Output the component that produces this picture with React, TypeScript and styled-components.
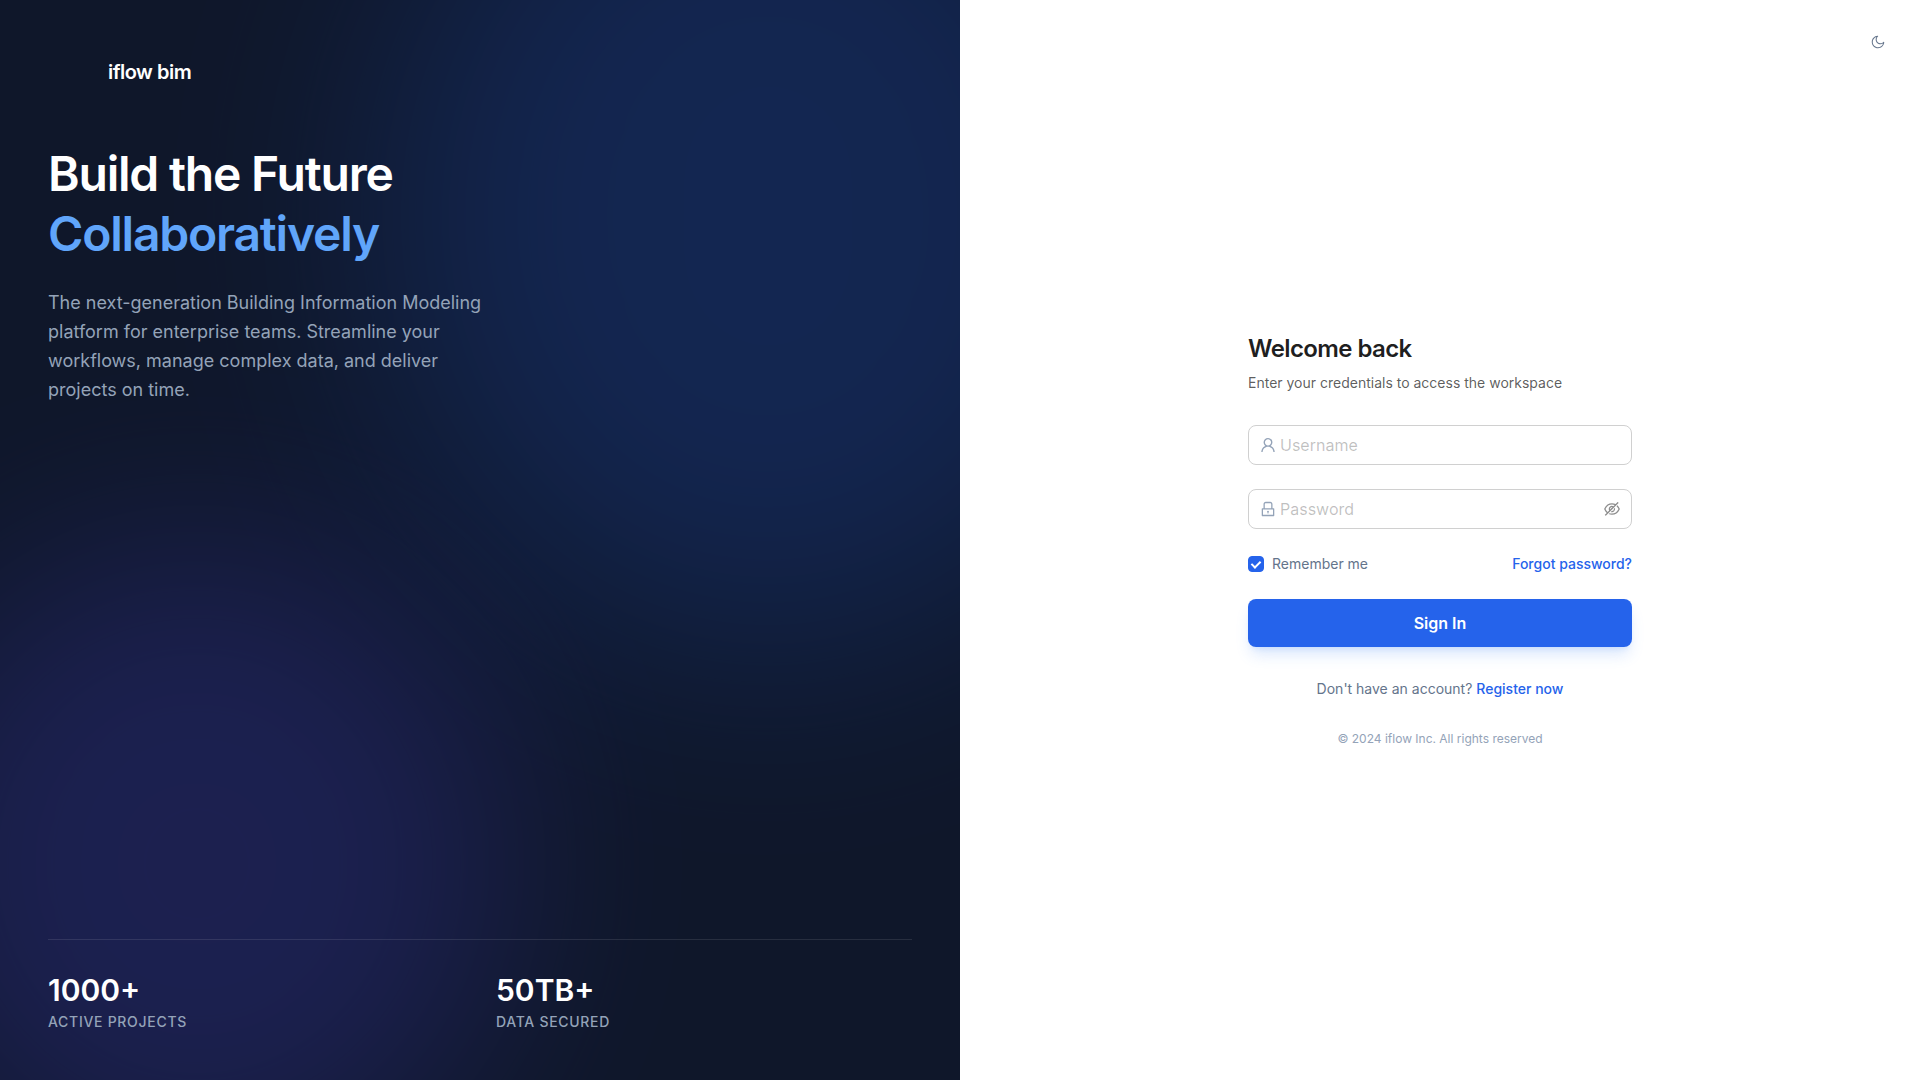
import React, { useState } from "react";
import styled, { createGlobalStyle } from "styled-components";
import { AiOutlineEye, AiOutlineEyeInvisible, AiOutlineLock, AiOutlineUser } from "react-icons/ai";

const GlobalStyle = createGlobalStyle`
  *, *::before, *::after { box-sizing: border-box; }
  body {
    margin: 0;
    background: #ffffff;
    font-family: Inter, "Liberation Sans", sans-serif;
    font-size: 14px;
    line-height: 20px;
  }
  h1, h2, p, dl, dt, dd { margin: 0; }
  button, input { font-family: inherit; }
`;

const Page = styled.main`
  display: grid;
  grid-template-columns: 1fr 1fr;
  min-height: 100vh;

  @media (max-width: 900px) {
    grid-template-columns: 1fr;
  }
`;

const Hero = styled.section`
  position: relative;
  isolation: isolate;
  overflow: hidden;
  display: flex;
  flex-direction: column;
  justify-content: space-between;
  gap: 48px;
  padding: 48px;
  background: #0f172a;
  color: #ffffff;
`;

const Glow = styled.span<{ $width: string; $height: string; $blur: number; $color: string; $place: string }>`
  position: absolute;
  z-index: -1;
  inset: ${(p) => p.$place};
  width: ${(p) => p.$width};
  height: ${(p) => p.$height};
  border-radius: 50%;
  background: ${(p) => p.$color};
  opacity: 0.2;
  filter: blur(${(p) => p.$blur}px);
`;

const Intro = styled.div`
  display: flex;
  flex-direction: column;
`;

const Brand = styled.div`
  display: flex;
  align-items: center;
  gap: 12px;
  margin-bottom: 48px;
  font-size: 20px;
  font-weight: 600;
  letter-spacing: -0.025em;
`;

const BrandMark = styled.span`
  width: 48px;
  height: 48px;
`;

const Headline = styled.h1`
  margin-bottom: 24px;
  font-size: 48px;
  font-weight: 600;
  line-height: 60px;
  letter-spacing: -0.025em;
`;

const Accent = styled.span`
  display: block;
  color: #60a5fa;
`;

const Lead = styled.p`
  max-width: 448px;
  color: #94a3b8;
  font-size: 18px;
  line-height: 29px;
`;

const Stats = styled.dl`
  display: grid;
  grid-template-columns: 1fr 1fr;
  gap: 32px;
  padding-top: 32px;
  border-top: 1px solid rgba(255, 255, 255, 0.1);
`;

const Stat = styled.div`
  display: flex;
  flex-direction: column-reverse;
  gap: 4px;
`;

const StatLabel = styled.dt`
  color: #94a3b8;
  font-weight: 500;
  text-transform: uppercase;
  letter-spacing: 0.05em;
`;

const StatValue = styled.dd`
  font-size: 30px;
  font-weight: 600;
  line-height: 36px;
`;

const FormSide = styled.section`
  position: relative;
  display: flex;
  align-items: center;
  justify-content: center;
  padding: 32px;
`;

const ThemeButton = styled.button`
  position: absolute;
  top: 24px;
  right: 24px;
  display: grid;
  place-items: center;
  width: 36px;
  height: 36px;
  padding: 0;
  border: 0;
  border-radius: 50%;
  background: transparent;
  color: #64748b;
  font-size: 14px;
  cursor: pointer;
`;

const Panel = styled.div`
  width: 100%;
  max-width: 384px;
`;

const Title = styled.h2`
  margin-bottom: 8px;
  color: rgba(0, 0, 0, 0.88);
  font-size: 24px;
  font-weight: 600;
  line-height: 32px;
  letter-spacing: -0.025em;
`;

const Subtitle = styled.p`
  margin-bottom: 32px;
  color: rgba(0, 0, 0, 0.65);
`;

const Form = styled.form`
  display: flex;
  flex-direction: column;
  gap: 24px;
`;

const Field = styled.label`
  display: flex;
  align-items: center;
  gap: 4px;
  height: 40px;
  padding: 0 11px;
  border: 1px solid #d0d0d0;
  border-radius: 8px;
  background: #ffffff;
  color: #94a3b8;
  font-size: 16px;

  &:focus-within { border-color: #2563eb; }
  svg { flex: none; }
`;

const TextInput = styled.input`
  flex: 1;
  min-width: 0;
  padding: 0;
  border: 0;
  outline: 0;
  background: transparent;
  color: rgba(0, 0, 0, 0.88);
  font-size: 16px;
  line-height: 24px;

  &::placeholder { color: rgba(0, 0, 0, 0.25); opacity: 1; }
`;

const RevealButton = styled.button`
  display: grid;
  place-items: center;
  padding: 0;
  border: 0;
  background: transparent;
  color: rgba(0, 0, 0, 0.45);
  font-size: 16px;
  cursor: pointer;
`;

const Options = styled.div`
  display: flex;
  align-items: center;
  justify-content: space-between;
  height: 22px;
`;

const Remember = styled.label`
  display: flex;
  align-items: center;
  gap: 8px;
  color: #64748b;
  cursor: pointer;
`;

const Checkbox = styled.input`
  appearance: none;
  display: grid;
  justify-content: center;
  width: 16px;
  height: 16px;
  margin: 0;
  border: 1px solid #d0d0d0;
  border-radius: 4px;

  &:checked { border-color: #2563eb; background: #2563eb; }
  &:checked::after {
    content: "";
    width: 6px;
    height: 9px;
    margin-top: 2px;
    border: solid #ffffff;
    border-width: 0 2px 2px 0;
    transform: rotate(45deg);
  }
`;

const TextLink = styled.a`
  color: #2563eb;
  font-weight: 500;
  text-decoration: none;
`;

const SubmitButton = styled.button`
  height: 48px;
  border: 0;
  border-radius: 8px;
  background: #2563eb;
  box-shadow: 0 10px 15px -3px rgba(59, 130, 246, 0.2), 0 4px 6px -4px rgba(59, 130, 246, 0.2);
  color: #ffffff;
  font-size: 16px;
  font-weight: 600;
  cursor: pointer;
`;

const Register = styled.p`
  margin-top: 32px;
  color: #64748b;
  text-align: center;
`;

const Copyright = styled.p`
  margin-top: 32px;
  color: #94a3b8;
  font-size: 12px;
  line-height: 16px;
  text-align: center;
`;

const ICON_BOX = "64 64 896 896";

const MoonIcon = () => (
  <svg viewBox={ICON_BOX} width="1em" height="1em" fill="currentColor" aria-hidden="true">
    <path d="M489.5 111.66c30.65-1.8 45.98 36.44 22.58 56.33A243.35 243.35 0 00426 354c0 134.76 109.24 244 244 244 72.58 0 139.9-31.83 186.01-86.08 19.87-23.38 58.07-8.1 56.34 22.53C900.4 745.82 725.15 912 512.5 912 291.31 912 112 732.69 112 511.5c0-211.39 164.29-386.02 374.2-399.65l.2-.01zm-81.15 79.75l-4.11 1.36C271.1 237.94 176 364.09 176 511.5 176 697.34 326.66 848 512.5 848c148.28 0 274.94-96.2 319.45-230.41l.63-1.93-.11.07a307.06 307.06 0 01-159.73 46.26L670 662c-170.1 0-308-137.9-308-308 0-58.6 16.48-114.54 46.27-162.47z" />
  </svg>
);

const stats = [
  { value: "1000+", label: "Active Projects" },
  { value: "50TB+", label: "Data Secured" },
];

export default function App() {
  const [revealed, setRevealed] = useState(false);

  return (
    <>
      <GlobalStyle />
      <Page>
        <Hero>
          <Glow $width="80%" $height="80%" $blur={120} $color="#2563eb" $place="-20% -20% auto auto" />
          <Glow $width="65%" $height="60%" $blur={100} $color="#4f46e5" $place="auto auto -10% -12%" />
          <Intro>
            <Brand>
              <BrandMark />
              <span>iflow bim</span>
            </Brand>
            <Headline>
              Build the Future
              <Accent>Collaboratively</Accent>
            </Headline>
            <Lead>
              The next-generation Building Information Modeling platform for enterprise teams. Streamline your
              workflows, manage complex data, and deliver projects on time.
            </Lead>
          </Intro>
          <Stats>
            {stats.map((stat) => (
              <Stat key={stat.label}>
                <StatLabel>{stat.label}</StatLabel>
                <StatValue>{stat.value}</StatValue>
              </Stat>
            ))}
          </Stats>
        </Hero>

        <FormSide>
          <ThemeButton type="button" aria-label="Switch to dark theme">
            <MoonIcon />
          </ThemeButton>
          <Panel>
            <Title>Welcome back</Title>
            <Subtitle>Enter your credentials to access the workspace</Subtitle>
            <Form onSubmit={(event) => event.preventDefault()}>
              <Field htmlFor="username">
                <AiOutlineUser viewBox={ICON_BOX} aria-hidden="true" />
                <TextInput id="username" type="text" placeholder="Username" aria-label="Username" autoComplete="username" />
              </Field>
              <Field htmlFor="password">
                <AiOutlineLock viewBox={ICON_BOX} aria-hidden="true" />
                <TextInput
                  id="password"
                  type={revealed ? "text" : "password"}
                  placeholder="Password"
                  aria-label="Password"
                  autoComplete="current-password"
                />
                <RevealButton
                  type="button"
                  aria-label={revealed ? "Hide password" : "Show password"}
                  onClick={() => setRevealed(!revealed)}
                >
                  {revealed ? <AiOutlineEye viewBox={ICON_BOX} /> : <AiOutlineEyeInvisible viewBox={ICON_BOX} />}
                </RevealButton>
              </Field>
              <Options>
                <Remember htmlFor="remember">
                  <Checkbox id="remember" type="checkbox" defaultChecked />
                  Remember me
                </Remember>
                <TextLink href="#forgot">Forgot password?</TextLink>
              </Options>
              <SubmitButton type="submit">Sign In</SubmitButton>
            </Form>
            <Register>
              Don't have an account? <TextLink href="#register">Register now</TextLink>
            </Register>
            <Copyright>© 2024 iflow Inc. All rights reserved</Copyright>
          </Panel>
        </FormSide>
      </Page>
    </>
  );
}
